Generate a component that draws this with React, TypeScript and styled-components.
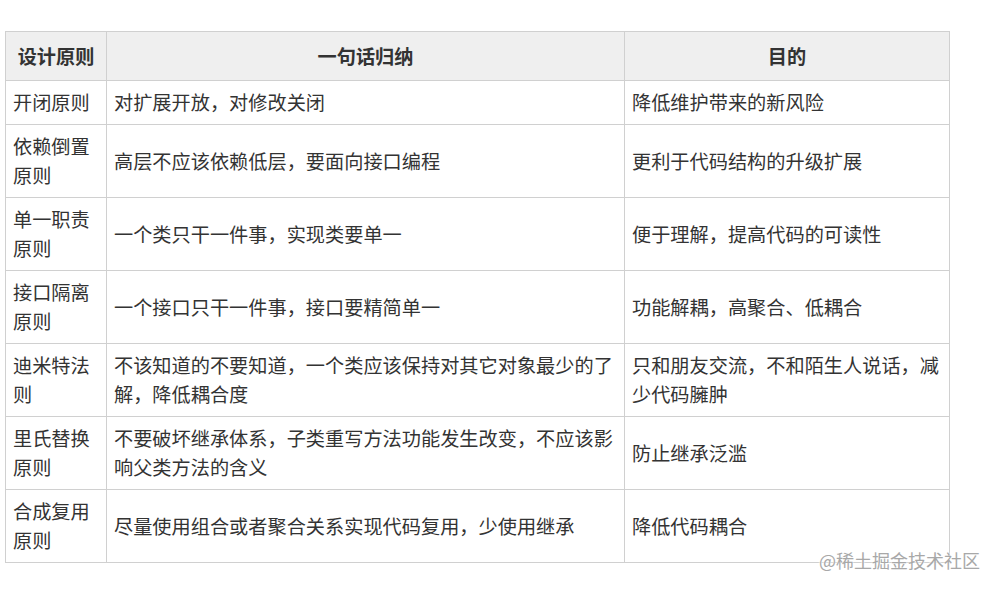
import React from "react";
import styled, { createGlobalStyle } from "styled-components";

const Global = createGlobalStyle`
  html, body { margin: 0; padding: 0; background: #ffffff; }
  body { font-family: "Noto Sans CJK SC", "Noto Sans", sans-serif; }
`;

const Page = styled.div`
  position: relative;
  width: 998px;
  height: 589px;
  padding: 31px 0 0 5px;
  box-sizing: border-box;
  overflow: hidden;
`;

const Table = styled.table`
  border-collapse: collapse;
  table-layout: fixed;
  width: 944px;
  font-size: 19.2px;
  line-height: 29px;
  color: #333333;
`;

const HeadCell = styled.th`
  background: #efefef;
  border: 1px solid #d0d0d0;
  padding: 10px 7px 9px;
  font-weight: 700;
  text-align: center;
  vertical-align: middle;
`;

const Cell = styled.td`
  border: 1px solid #d0d0d0;
  padding: 7px 7px;
  text-align: left;
  vertical-align: middle;
  word-break: break-all;
`;

const Watermark = styled.div`
  position: absolute;
  left: 819px;
  top: 548px;
  font-size: 18px;
  line-height: 24px;
  color: #a8a8a8;
  white-space: nowrap;
  text-shadow: 0 0 2px #ffffff, 0 0 2px #ffffff;
`;

const rows: [string, string, string][] = [
  ["开闭原则", "对扩展开放，对修改关闭", "降低维护带来的新风险"],
  ["依赖倒置原则", "高层不应该依赖低层，要面向接口编程", "更利于代码结构的升级扩展"],
  ["单一职责原则", "一个类只干一件事，实现类要单一", "便于理解，提高代码的可读性"],
  ["接口隔离原则", "一个接口只干一件事，接口要精简单一", "功能解耦，高聚合、低耦合"],
  [
    "迪米特法则",
    "不该知道的不要知道，一个类应该保持对其它对象最少的了解，降低耦合度",
    "只和朋友交流，不和陌生人说话，减少代码臃肿",
  ],
  [
    "里氏替换原则",
    "不要破坏继承体系，子类重写方法功能发生改变，不应该影响父类方法的含义",
    "防止继承泛滥",
  ],
  ["合成复用原则", "尽量使用组合或者聚合关系实现代码复用，少使用继承", "降低代码耦合"],
];

export default function App() {
  return (
    <>
      <Global />
      <Page>
        <Table>
          <colgroup>
            <col style={{ width: "101px" }} />
            <col style={{ width: "518px" }} />
            <col style={{ width: "325px" }} />
          </colgroup>
          <thead>
            <tr>
              <HeadCell>设计原则</HeadCell>
              <HeadCell>一句话归纳</HeadCell>
              <HeadCell>目的</HeadCell>
            </tr>
          </thead>
          <tbody>
            {rows.map((r) => (
              <tr key={r[0]}>
                <Cell>{r[0]}</Cell>
                <Cell>{r[1]}</Cell>
                <Cell>{r[2]}</Cell>
              </tr>
            ))}
          </tbody>
        </Table>
        <Watermark>@稀土掘金技术社区</Watermark>
      </Page>
    </>
  );
}
